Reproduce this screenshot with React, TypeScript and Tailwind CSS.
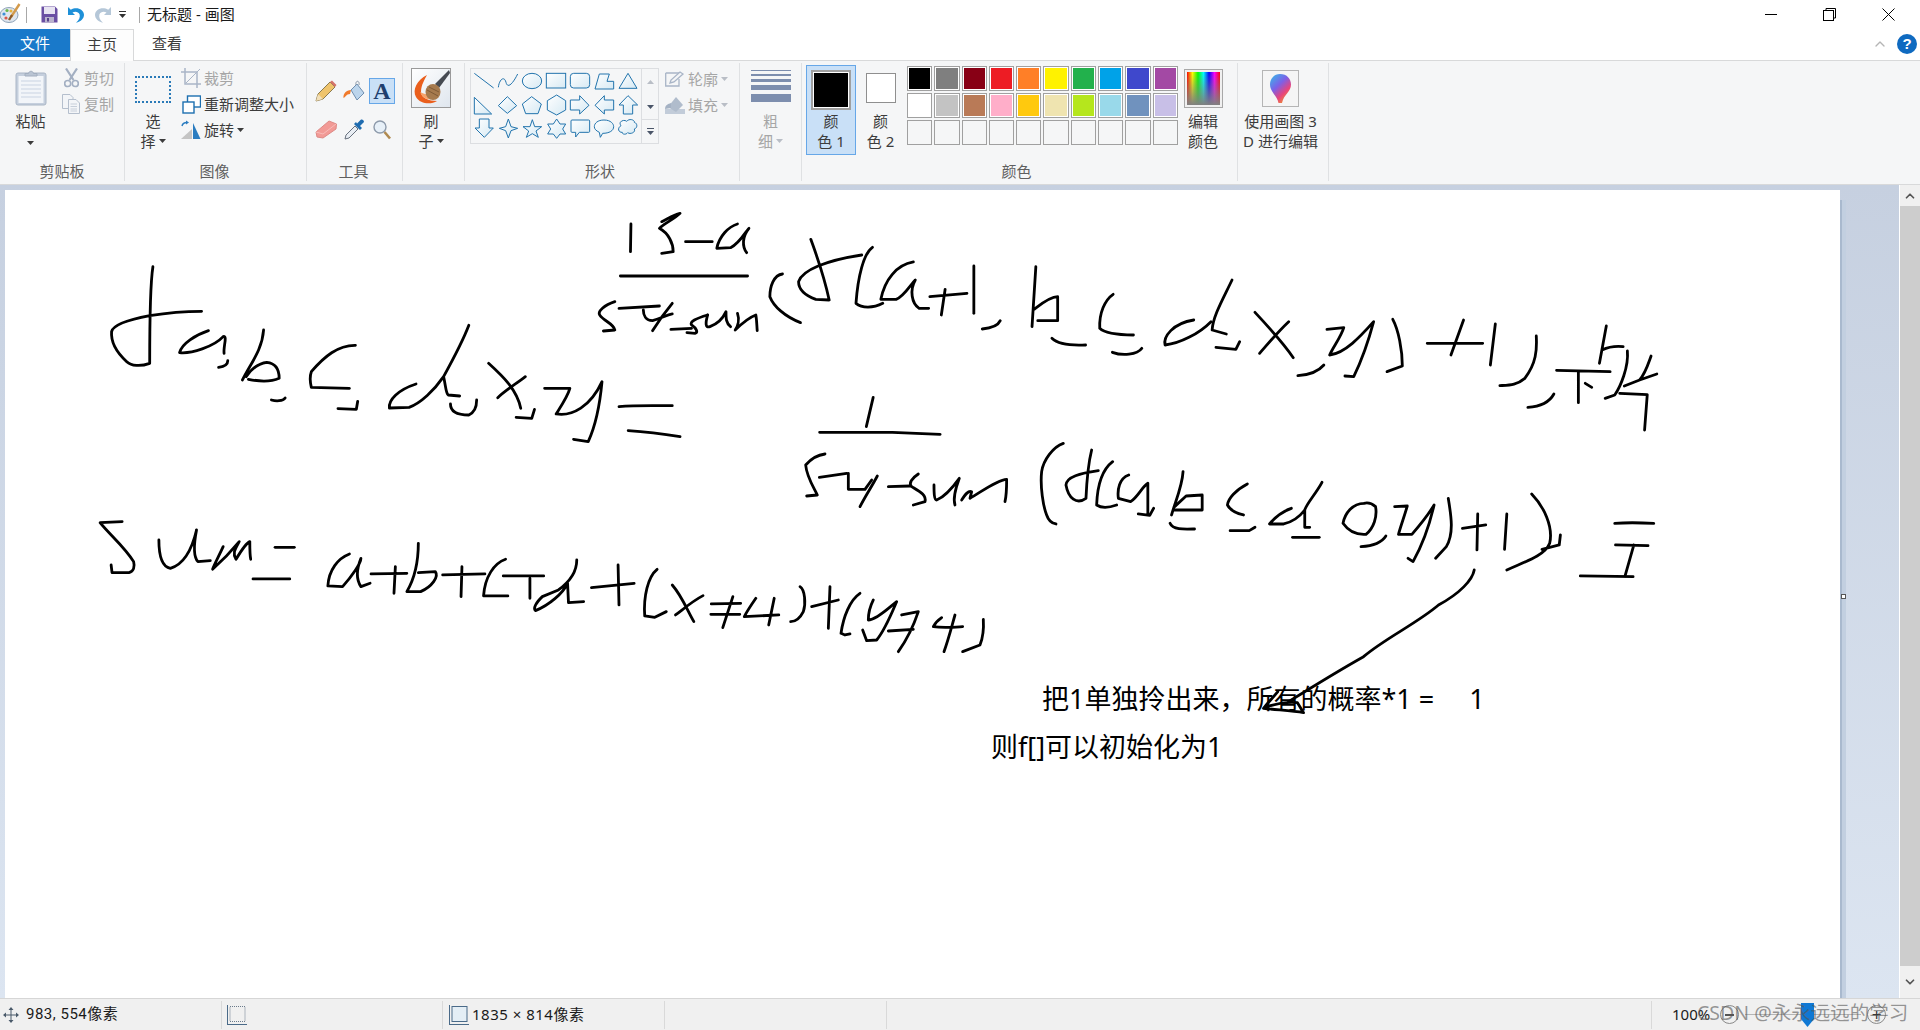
import React from 'react';
import { ChevronUp, ChevronDown } from 'lucide-react';

const row1 = ['#000000', '#7f7f7f', '#880015', '#ed1c24', '#ff7f27', '#fff200', '#22b14c', '#00a2e8', '#3f48cc', '#a349a4'];
const row2 = ['#ffffff', '#c3c3c3', '#b97a57', '#ffaec9', '#ffc90e', '#efe4b0', '#b5e61d', '#99d9ea', '#7092be', '#c8bfe7'];

// handwriting, traced from crops: each group keeps the coordinates of its crop
const inkFirst = [
  'M137 200 C130 260 130 400 130 490 C110 500 90 498 80 485 C60 460 45 430 47 395 C50 375 80 360 130 347 C170 338 200 334 243 334',
  'M258 392 C230 405 200 430 195 458 C220 462 270 440 290 410 C300 405 290 440 292 460',
  'M300 482 C300 495 290 500 280 502',
  'M378 390 C375 450 350 490 332 540 M345 538 C370 545 395 545 412 535 C412 510 405 490 385 487 C365 490 350 510 340 530',
  'M395 600 C405 604 420 604 425 594',
  'M578 436 C540 435 510 470 482 515 C478 530 480 550 482 562 L565 565',
  'M540 626 L580 628 L583 604',
  'M825 376 C810 430 790 480 770 530 C750 570 720 610 695 622 L652 624 C650 600 670 570 710 552 M770 530 C775 560 775 580 780 585 L805 588',
  'M785 612 C785 635 800 645 825 645 C840 635 842 615 842 600',
  'M868 490 C900 530 930 570 938 625 M948 530 C930 550 905 570 888 593',
  'M928 652 L962 655 L968 628',
  'M990 565 L1045 565 C1040 590 1025 620 1015 642 C1050 650 1090 620 1115 545 C1110 620 1100 680 1085 725 L1053 718',
  'M1152 620 C1190 615 1230 617 1268 617',
  'M1172 692 C1210 695 1250 702 1285 710',
  'M1178 72 L1177 155',
  'M1245 65 C1260 55 1270 45 1285 40 C1270 60 1250 70 1240 85 C1260 100 1270 130 1270 155 L1245 160',
  'M1297 125 L1355 125',
  'M1410 72 C1390 80 1370 110 1365 145 L1395 143 C1415 130 1430 90 1435 85 C1420 110 1420 140 1430 158',
  'M1155 228 L1432 228',
  'M1143 305 C1120 315 1105 335 1110 345 C1120 365 1140 370 1143 390 L1118 393',
  'M1152 325 L1240 318',
  'M1205 330 C1205 345 1210 362 1225 362 C1245 355 1255 345 1268 342 M1268 310 C1250 340 1235 370 1225 392',
  'M1265 388 L1310 385',
  'M1345 345 C1320 355 1305 365 1310 375 C1320 385 1325 395 1318 400 L1300 398',
  'M1345 345 C1340 370 1340 385 1350 380 C1370 370 1380 350 1385 335 C1385 355 1385 370 1395 380',
  'M1410 340 C1415 360 1410 380 1405 390 C1420 370 1440 350 1450 345 C1452 360 1452 375 1453 392',
  'M70 965 L22 968 C40 1000 75 1040 95 1085 C98 1100 95 1115 85 1118 L48 1118 L46 1095',
  'M150 1020 C150 1060 155 1100 175 1105 C200 1095 220 1060 232 990 C225 1040 225 1070 235 1085 L262 1082',
  'M290 1040 C280 1070 270 1095 267 1108 C290 1080 310 1050 325 1025 C315 1050 310 1060 318 1078 C330 1050 340 1030 348 1025 C348 1050 348 1065 350 1078',
  'M403 1042 L445 1042',
  'M355 1137 L435 1137',
  'M565 1062 C540 1075 520 1110 518 1158 L550 1160 C570 1130 590 1090 590 1075 C580 1110 580 1140 590 1160 L610 1150',
  'M612 1122 L690 1120 M665 1100 L662 1180',
  'M715 1030 C715 1090 705 1140 690 1175 L720 1175 C745 1160 760 1130 752 1115 L715 1118',
  'M768 1125 L860 1122 M810 1100 L808 1190',
  'M905 1078 C880 1090 860 1130 857 1188 L910 1188',
  'M900 1128 L988 1128 M958 1135 L958 1195',
  'M1060 1080 C1060 1120 1040 1150 1020 1170 L985 1190 C970 1210 965 1225 970 1232 C1000 1215 1030 1180 1040 1150 L1042 1208 L1075 1205',
  'M1092 1163 L1185 1150 M1150 1095 L1152 1215',
  'M1235 1108 C1215 1130 1205 1190 1208 1248 L1230 1252 L1255 1235',
  'M1268 1155 C1290 1190 1300 1230 1315 1265 M1335 1187 C1310 1205 1290 1230 1275 1245',
  'M1352 1243 L1415 1243 M1353 1212 L1417 1210 M1400 1190 L1378 1283',
  'M1450 1195 C1440 1215 1430 1235 1425 1250 L1500 1245 M1490 1195 L1478 1275',
];

const inkTop = [
  'M503 222 C480 225 470 260 470 290 C480 320 510 350 550 368',
  'M577 118 C590 160 610 220 625 300 L590 298 C560 285 545 270 545 245 C555 210 620 180 710 165',
  'M738 142 C715 160 700 230 695 310 C710 325 740 325 765 310',
  'M845 186 C800 195 770 240 760 298 L800 298 C820 290 840 250 850 240 C835 270 840 310 860 325 L885 325',
  'M888 290 L985 280 M928 268 L918 345',
  'M1003 198 L1003 340',
  'M1025 387 C1045 385 1065 380 1072 362',
  'M1165 200 L1155 380 M1158 330 C1170 320 1200 290 1222 290 L1222 362 L1170 362',
  'M1207 415 C1225 435 1260 437 1295 435',
  'M1367 283 C1345 300 1330 340 1332 385 C1345 400 1380 405 1420 405',
  'M1365 457 C1390 468 1430 465 1442 445',
  'M600 697 L790 697 L915 703',
  'M740 592 L722 680',
];

const inkRight = [
  'M345 -30 C320 30 295 80 293 120 L330 132',
  'M290 95 C260 130 210 160 170 165 C165 140 190 100 245 90',
  'M303 172 L355 178 L365 155',
  'M405 67 C440 110 480 160 505 203 M493 95 C465 125 440 160 417 190',
  'M517 257 C545 255 570 245 585 225',
  'M593 118 L637 113 C630 140 610 170 600 195 C640 190 680 140 715 95 C700 160 680 220 663 260 L640 258',
  'M765 88 C780 120 790 180 790 228 L750 245',
  'M855 160 L1000 160 M950 90 L917 195',
  'M1033 102 L1020 225',
  'M1140 138 C1142 180 1140 220 1110 265 C1090 285 1070 285 1045 287',
  'M1118 352 C1150 350 1175 335 1186 312',
  'M1193 241 L1333 245 M1250 245 L1250 338 M1268 280 L1285 292',
  'M1323 108 L1305 220 M1312 180 C1330 170 1350 168 1367 170',
  'M1378 183 C1382 230 1360 290 1345 315 L1320 325',
  'M1440 198 C1430 230 1425 250 1410 270 L1370 288 M1455 252 L1410 270',
  'M1358 310 L1430 314 L1423 420',
  'M75 555 C50 565 45 600 48 625 L80 635 C100 620 110 590 125 580 L125 670 M100 672 L130 676 L140 655',
  'M217 545 C215 590 195 640 187 675 M195 660 L267 660 L267 615 L225 618 L195 650',
  'M183 700 C190 720 220 718 247 717',
  'M385 582 C355 600 335 625 333 645 C340 660 355 670 375 675',
  'M340 722 L390 722 L405 712',
  'M580 577 C565 610 540 640 535 660 L535 712 L548 712 M500 655 C475 665 455 685 443 702 L480 702 C505 695 525 675 535 660',
  'M503 742 L573 742',
  'M690 640 C660 640 640 670 635 700 C650 725 670 735 695 733 C715 715 725 680 720 650 C710 640 700 637 690 640',
  'M682 770 C710 768 735 760 747 738',
  'M770 650 L803 648 C795 680 785 710 780 733 L815 733 C840 700 860 670 873 645 C860 710 840 770 818 815 L805 805',
  'M910 625 C918 680 925 730 905 770 L877 805',
  'M947 715 L1008 705 M987 672 L985 780',
  'M1063 672 L1057 778',
  'M1128 612 C1160 650 1185 710 1175 760 C1165 790 1135 805 1063 840 M1155 778 L1200 765 L1203 735',
  'M1345 700 C1370 698 1410 698 1447 700',
  'M1347 765 L1432 767 M1395 765 L1372 858',
  'M1255 858 L1393 860',
];

const inkMiddle = [
  'M105 72 C80 75 60 90 47 105 C50 140 70 170 82 195 L50 198',
  'M88 142 L170 130',
  'M175 130 L175 178 L225 178 M262 138 C245 170 225 200 210 230 M225 178 L245 150',
  'M295 170 L360 168',
  'M385 132 C365 145 355 160 365 170 C390 185 410 195 405 215 L370 225',
  'M432 165 C432 190 433 210 440 210 C465 200 490 170 508 145 C495 180 490 210 495 225',
  'M515 210 C525 195 535 180 545 185 L540 205 C575 185 620 150 650 148 C650 170 650 195 645 215',
  'M820 40 C790 50 760 90 755 125 C750 170 760 230 770 255 C775 270 785 280 798 282',
  'M905 60 C895 100 890 160 888 205 C860 225 835 205 828 165 C830 140 870 130 925 122',
  'M968 95 C935 120 922 170 920 225 C935 235 960 232 980 225',
];

const inkTail = [
  'M90 50 C105 60 108 100 100 125 C90 145 75 155 62 155',
  'M125 110 L205 90 M180 50 L175 175',
  'M270 70 C240 90 220 140 213 190 L225 195 L240 192',
  'M310 90 C300 110 295 130 295 150 C320 150 360 110 380 95 C365 130 345 180 320 210 L290 212 L278 180',
  'M355 183 L430 178 M395 135 L445 125 C430 170 410 210 385 245',
  'M515 143 C505 150 495 160 490 170 C520 175 550 172 578 170 M555 135 C545 170 535 210 522 245',
  'M640 148 C642 180 640 200 630 225 L578 245',
];

const inkArrow = [
  'M1440 30 C1435 60 1400 100 1340 135 C1280 190 1190 235 1130 290 C1080 320 1010 365 920 425',
  'M890 395 C875 415 860 430 850 445 C890 450 930 452 962 458 L945 428 C920 425 890 430 860 440',
];

function Ink({ paths, transform }: { paths: string[]; transform: string }) {
  return (
    <g transform={transform}>
      {paths.map((d) => (
        <path key={d} d={d} fill="none" stroke="#000" strokeWidth="2.8" strokeLinecap="round" strokeLinejoin="round" vectorEffect="non-scaling-stroke" />
      ))}
    </g>
  );
}

function PaintLogo() {
  return (
    <svg width="21" height="21" viewBox="0 0 21 21">
      <ellipse cx="9" cy="12" rx="9" ry="7.5" fill="#dfe6ee" stroke="#8fa3b8" />
      <circle cx="4" cy="11" r="1.6" fill="#3d8fd6" />
      <circle cx="7" cy="7.5" r="1.6" fill="#6cb84a" />
      <circle cx="11" cy="8" r="1.5" fill="#e8b23a" />
      <circle cx="6" cy="15" r="1.6" fill="#d9574a" />
      <path d="M19.5 1 L11 14" stroke="#d39a4b" strokeWidth="2.4" />
      <path d="M12 12 L9 17" stroke="#8a5a2a" strokeWidth="2.4" />
    </svg>
  );
}

function SaveIcon() {
  return (
    <svg width="17" height="17" viewBox="0 0 17 17">
      <path d="M0.5 0.5 H14 L16.5 3 V16.5 H0.5 Z" fill="#6a4fa3" />
      <rect x="3" y="1" width="11" height="7" fill="#e8e4f2" />
      <rect x="4" y="11" width="9" height="5.5" fill="#b9b3cd" />
      <rect x="6" y="12" width="2" height="3.5" fill="#57428a" />
    </svg>
  );
}

function UndoIcon({ color, flip }: { color: string; flip?: boolean }) {
  return (
    <svg width="18" height="18" viewBox="0 0 18 18" className={flip ? '-scale-x-100' : ''}>
      <path d="M1 1 V9 H8 L5.5 6.6 C8 5 11.5 5.6 12.6 8.4 C13.4 11 12 14 9 16.8 C14 15.8 17 12.4 17 8.8 C16.6 3.2 9.6 0.4 3.8 3.8 Z" fill={color} />
    </svg>
  );
}

function SmallCaret({ color = '#3c3c3c' }: { color?: string }) {
  return (
    <svg width="7" height="4" viewBox="0 0 7 4" className="inline-block">
      <path d="M0 0 H7 L3.5 4 Z" fill={color} />
    </svg>
  );
}

function PasteIcon() {
  return (
    <svg width="32" height="36" viewBox="0 0 32 36">
      <rect x="1" y="3" width="30" height="32" rx="2" fill="#c5cfdd" stroke="#aab6c6" />
      <rect x="3.5" y="6" width="25" height="27" fill="#f2f5f9" />
      <path d="M6 11 H26 M6 15 H26 M6 19 H26 M6 23 H26 M6 27 H26" stroke="#c9d3e2" />
      <path d="M10 6 V3.5 H13.5 C14 0.5 18 0.5 18.5 3.5 H22 V6 Z" fill="#b9c4d3" stroke="#a2aebf" />
    </svg>
  );
}

function CutIcon() {
  return (
    <svg width="15" height="20" viewBox="0 0 15 20" fill="none" stroke="#a3afc2" strokeWidth="1.6">
      <path d="M2 0.5 L9.5 12 M13 0.5 L5.5 12" strokeWidth="2.2" />
      <circle cx="3.7" cy="15.5" r="3" />
      <circle cx="11.3" cy="15.5" r="3" />
    </svg>
  );
}

function CopyIcon() {
  return (
    <svg width="18" height="20" viewBox="0 0 18 20" fill="#f3f5f8" stroke="#b5bfcd">
      <path d="M0.5 0.5 H8 L11 3.5 V14.5 H0.5 Z" />
      <path d="M6.5 5.5 H14 L17.5 9 V19.5 H6.5 Z" />
      <path d="M8.5 10 H15 M8.5 12.5 H15 M8.5 15 H15 M8.5 17 H15" stroke="#c7cfda" />
    </svg>
  );
}

function CropIcon() {
  return (
    <svg width="20" height="20" viewBox="0 0 20 20" fill="none" stroke="#a9b5c7" strokeWidth="1.5">
      <path d="M4 0 V16 H20 M0 4 H16 V20" />
      <path d="M19 1 L5 15" strokeWidth="1" />
    </svg>
  );
}

function ResizeIcon() {
  return (
    <svg width="19" height="19" viewBox="0 0 19 19" fill="#fff" stroke="#1d6fb0" strokeWidth="1.4">
      <rect x="5.5" y="1" width="13" height="11" />
      <rect x="1" y="7" width="11" height="11" />
    </svg>
  );
}

function RotateIcon() {
  return (
    <svg width="20" height="20" viewBox="0 0 20 20">
      <path d="M11 19 H0 L11 9 Z" fill="#c4c4c4" />
      <path d="M12 3 L19.5 19 H12 Z" fill="#2a7cc0" />
      <path d="M1 6 C1.5 3.5 3.5 2.5 6 2.5" fill="none" stroke="#2a7cc0" strokeWidth="1.4" />
      <path d="M5 0.5 L8 2.5 L5 4.5 Z" fill="#2a7cc0" />
    </svg>
  );
}

function PencilIcon() {
  return (
    <svg width="22" height="22" viewBox="0 0 22 22">
      <path d="M1 21 L3 14 L15 2 L20 7 L8 19 Z" fill="#efc46c" stroke="#8a7a50" />
      <path d="M1 21 L3 14 L8 19 Z" fill="#f2dfb8" />
      <path d="M15 2 L17 0.5 L21.5 5 L20 7 Z" fill="#d4736a" />
    </svg>
  );
}

function BucketIcon() {
  return (
    <svg width="22" height="22" viewBox="0 0 22 22">
      <path d="M8 10 L14 4 L21 13 L14 20 Z" fill="#bcd5ec" stroke="#6f8fb0" />
      <path d="M13 5 C12 0 17 0 16 5" fill="none" stroke="#8b98a8" />
      <path d="M8 10 C3 10 0 14 0.5 18 C3 17 3 14 7 14 Z" fill="#f07a2c" />
    </svg>
  );
}

function EraserIcon() {
  return (
    <svg width="22" height="19" viewBox="0 0 22 19">
      <path d="M1 12 L14 1 L21.5 4 L21 9 L8 18 L2 17 Z" fill="#f29a96" stroke="#dd8a86" />
      <path d="M1 12 L8 14 L21 4" fill="none" stroke="#f8bcb9" />
    </svg>
  );
}

function DropperIcon() {
  return (
    <svg width="21" height="21" viewBox="0 0 21 21">
      <path d="M1 20 L2 16 L11 7 L14 10 L5 19 Z" fill="#e9eef4" stroke="#68717e" />
      <path d="M10 5 L16 11 L18 9 L16 7 L20 3 C20 1 18 0 16.5 1 L13 4.5 L12 3 Z" fill="#1f6cb0" />
    </svg>
  );
}

function ZoomIcon() {
  return (
    <svg width="18" height="20" viewBox="0 0 18 20">
      <circle cx="7" cy="7" r="6" fill="#e7f0f8" stroke="#8d9aab" strokeWidth="1.4" />
      <path d="M11.5 12 L17 18.5" stroke="#b08a50" strokeWidth="2.6" />
    </svg>
  );
}

function BrushIcon() {
  return (
    <svg width="40" height="40" viewBox="0 0 40 40">
      <defs>
        <linearGradient id="brushBg" x1="0" y1="0" x2="1" y2="1">
          <stop offset="0" stopColor="#ffffff" />
          <stop offset="1" stopColor="#dfe6ee" />
        </linearGradient>
      </defs>
      <rect x="0.5" y="0.5" width="39" height="39" fill="url(#brushBg)" stroke="#9a9a9a" />
      <path d="M16 7 C6 12 1 22 5 29 C9 36 20 37 26 33 C18 33 10 30 10 24 C10 17 14 11 16 7 Z" fill="#ea5f1d" />
      <path d="M9 24 C14 27 20 27 24 25 L20 31 C15 32 11 29 9 24 Z" fill="#f7a36a" />
      <path d="M24 16 L38 2 L39 5 L28 20 Z" fill="#454a52" />
      <ellipse cx="22" cy="24" rx="7.5" ry="8" fill="#a67a4d" />
      <path d="M16 22 L27 28 M18 19 L28 24" stroke="#7f5a36" />
    </svg>
  );
}

function ShapesGallery() {
  const bubble = 'M333 208 H383 Q386 208 386 211 V242 Q386 245 383 245 H355 L344 259 V245 H333 Q330 245 330 242 V211 Q330 208 333 208 Z';
  const cloud = 'M480 225 C470 212 490 205 497 212 C505 202 522 208 520 215 C530 218 530 232 520 235 C525 245 508 252 500 246 C494 254 482 250 484 245 C472 246 468 232 480 225 Z';
  const shapes = [
    'M328 148 H356 V135 L384 164 L356 190 V178 H328 Z',
    'M458 148 H430 V135 L402 164 L430 190 V178 H458 Z',
    'M501 135 L530 163 H515 V190 H487 V163 H474 Z',
    'M55 205 H84 V232 H97 L70 260 L42 232 H55 Z',
    'M142 205 L150 228 L170 233 L150 240 L142 262 L134 240 L115 233 L134 228 Z',
    'M214 207 L221 228 L242 228 L225 241 L232 260 L214 249 L196 260 L203 241 L186 228 L207 228 Z',
    'M287 205 L297 220 L314 220 L305 235 L314 250 L297 250 L287 263 L277 250 L260 250 L269 235 L260 220 L277 220 Z',
    bubble,
    'M429 208 C450 208 458 220 458 228 C458 240 445 248 425 248 L418 260 L415 245 C405 240 400 235 400 228 C400 218 410 208 429 208 Z',
    cloud,
    'M40 140 L92 190 H40 Z',
    'M139 138 L167 165 L139 188 L112 165 Z',
    'M212 138 L241 160 L231 189 H194 L184 160 Z',
    'M287 133 L314 150 V178 L287 193 L259 178 V150 Z',
    'M415 70 H445 L438 92 H458 V115 H402 Z',
    'M501 68 L528 113 H474 Z',
  ];
  return (
    <svg width="170" height="75" viewBox="30 55 510 225" className="block">
      <defs>
        <linearGradient id="shapeFill" x1="0" y1="0" x2="1" y2="1">
          <stop offset="0" stopColor="#ffffff" />
          <stop offset="1" stopColor="#d6e9f3" />
        </linearGradient>
      </defs>
      <g fill="url(#shapeFill)" stroke="#2274ad" strokeWidth="3">
        <path d="M40 68 L98 112" fill="none" />
        <path d="M112 110 C115 85 130 75 135 95 C140 115 155 100 170 70" fill="none" />
        <ellipse cx="213" cy="91" rx="29" ry="23" />
        <rect x="256" y="68" width="58" height="44" />
        <rect x="328" y="68" width="58" height="44" rx="10" />
        {shapes.map((d) => (
          <path key={d} d={d} />
        ))}
      </g>
    </svg>
  );
}

function OutlineIcon() {
  return (
    <svg width="20" height="16" viewBox="0 0 20 16" fill="none" stroke="#a9b5c7" strokeWidth="1.3">
      <path d="M0.7 2 H14 M0.7 2 V15 H14 V8" />
      <path d="M5 12 L6 9 L15 1 L18 3 L9 11 Z" fill="#f4f5f7" />
    </svg>
  );
}

function FillIcon() {
  return (
    <svg width="20" height="20" viewBox="0 0 20 20">
      <path d="M0 19 H20 V14 H0 Z" fill="#c2ccd9" />
      <path d="M3 12 L11 2 L18 10 L11 17 Z" fill="#b0bccc" />
      <path d="M0 14 C0 10 3 9 6 8 L6 13 Z" fill="#a5b2c4" />
    </svg>
  );
}

function ThicknessIcon() {
  return (
    <svg width="40" height="33" viewBox="0 0 40 33" className="block" fill="#7d8eae">
      <rect x="0" y="0" width="40" height="1" />
      <rect x="0" y="4" width="40" height="2" />
      <rect x="0" y="9" width="40" height="3" />
      <rect x="0" y="15" width="40" height="5" />
      <rect x="0" y="24" width="40" height="8" />
    </svg>
  );
}

function Paint3dIcon() {
  return (
    <svg width="37" height="37" viewBox="0 0 37 37" className="block">
      <defs>
        <linearGradient id="dropFill" x1="0.1" y1="0" x2="0.8" y2="1">
          <stop offset="0" stopColor="#39b6e8" />
          <stop offset="0.4" stopColor="#7b61e8" />
          <stop offset="0.7" stopColor="#e8447c" />
          <stop offset="1" stopColor="#f0a020" />
        </linearGradient>
      </defs>
      <rect x="0.5" y="0.5" width="36" height="36" fill="#f5f5f5" stroke="#b5b5b5" />
      <path d="M18 4 C25 4 29 9 29 14.5 C29 22 22 24 20 33 C18 33 17 33 16.5 33 C15.5 26 8 22 8 14.5 C8 9 12 4 18 4 Z" fill="url(#dropFill)" />
    </svg>
  );
}

function MoveIcon() {
  return (
    <svg width="16" height="16" viewBox="0 0 16 16" fill="#4a5a6a">
      <path d="M7.5 2 H8.5 V14 H7.5 Z M2 7.5 H14 V8.5 H2 Z" />
      <path d="M8 0 L10.5 3 H5.5 Z M8 16 L5.5 13 H10.5 Z M0 8 L3 5.5 V10.5 Z M16 8 L13 5.5 V10.5 Z" />
    </svg>
  );
}

function SelectionSizeIcon() {
  return (
    <svg width="20" height="20" viewBox="0 0 20 20" fill="none">
      <path d="M0.5 0 V20 M0 19.5 H20" stroke="#4a6a88" />
      <rect x="3" y="1.5" width="15" height="15" stroke="#6a7a8a" strokeDasharray="1 1" />
    </svg>
  );
}

function CanvasSizeIcon() {
  return (
    <svg width="20" height="20" viewBox="0 0 20 20">
      <path d="M0.5 0 V20 M0 19.5 H20" stroke="#4a6a88" fill="none" />
      <rect x="3" y="1.5" width="15" height="15" fill="#e4eef5" stroke="#4a6a88" />
    </svg>
  );
}

function Group({ width, label, labelPad = '', children }: { width: string; label: string; labelPad?: string; children: React.ReactNode }) {
  return (
    <div className={`${width} h-full shrink-0 flex flex-col border-r border-[#dfe1e3]`}>
      <div className="h-[98px] flex">{children}</div>
      <div className={`h-5 text-center leading-5 text-[#5f5f5f] ${labelPad}`}>{label}</div>
    </div>
  );
}

function Big({ icon, width, children }: { icon: React.ReactNode; width: string; children: React.ReactNode }) {
  return (
    <div className={`${width} shrink-0 flex flex-col items-center`}>
      <div className="h-[48px] flex items-center justify-center">{icon}</div>
      <div className="text-center leading-5">{children}</div>
    </div>
  );
}

function SmallRow({ icon, disabled, children }: { icon: React.ReactNode; disabled?: boolean; children: React.ReactNode }) {
  return (
    <div className={`h-[26px] flex items-center gap-[3px] ${disabled ? 'text-[#a6a6a6]' : ''}`}>
      <div className="w-[20px] flex justify-center">{icon}</div>
      {children}
    </div>
  );
}

function Ribbon() {
  return (
    <div className="h-[124px] shrink-0 bg-[#f5f6f7] pt-[2px] flex text-[15px] text-[#3c3c3c] border-b border-[#d8d9da]">
      <div className="h-[118px] flex">
        <Group width="w-[125px]" label="剪贴板">
          <Big width="w-[61px]" icon={<div className="mt-[2px]"><PasteIcon /></div>}>
            粘贴
            <div className="leading-5">
              <SmallCaret />
            </div>
          </Big>
          <div className="pt-[2px]">
            <SmallRow disabled icon={<CutIcon />}>剪切</SmallRow>
            <SmallRow disabled icon={<CopyIcon />}>复制</SmallRow>
          </div>
        </Group>
        <Group width="w-[182px]" label="图像" labelPad="pr-[2px]">
          <Big
            width="w-[56px]"
            icon={<div className="w-[36px] h-[27px] mt-[5px] border-2 border-dotted border-[#2a7ab8]" />}
          >
            选
            <div className="flex items-center justify-center gap-[3px]">
              择 <SmallCaret />
            </div>
          </Big>
          <div className="pt-[2px]">
            <SmallRow disabled icon={<CropIcon />}>裁剪</SmallRow>
            <SmallRow icon={<ResizeIcon />}>重新调整大小</SmallRow>
            <SmallRow icon={<RotateIcon />}>
              旋转 <SmallCaret />
            </SmallRow>
          </div>
        </Group>
        <Group width="w-[96px]" label="工具" labelPad="pr-[2px]">
          <div className="w-full pt-[14px] pl-[5px] grid grid-cols-[28px_28px_28px] grid-rows-[27px_27px] gap-y-[12px] justify-items-center items-center">
            <PencilIcon />
            <BucketIcon />
            <div className="w-[26px] h-[26px] bg-[#c9e0f7] border border-[#66a7e8] flex items-center justify-center font-['Liberation_Serif',serif] font-bold text-[24px] leading-none text-[#1f3f6f]">
              A
            </div>
            <EraserIcon />
            <DropperIcon />
            <ZoomIcon />
          </div>
        </Group>
        <Group width="w-[62px]" label="">
          <Big width="w-[56px]" icon={<div className="mt-[2px]"><BrushIcon /></div>}>
            刷
            <div className="flex items-center justify-center gap-[3px]">
              子 <SmallCaret />
            </div>
          </Big>
        </Group>
        <Group width="w-[275px]" label="形状" labelPad="pr-[4px]">
          <div className="ml-[5px] mt-[5px] h-[76px] flex border border-[#dcdee1]">
            <ShapesGallery />
            <div className="w-[17px] flex flex-col items-center border-l border-[#dcdee1]">
              <div className="h-[25px] flex items-center">
                <svg width="7" height="4" viewBox="0 0 7 4"><path d="M0 4 H7 L3.5 0 Z" fill="#b9bec6" /></svg>
              </div>
              <div className="h-[25px] flex items-center">
                <SmallCaret color="#4a5568" />
              </div>
              <div className="h-[24px] flex flex-col items-center justify-center gap-[2px] border-t border-[#dcdee1] w-full">
                <div className="w-[7px] h-px bg-[#4a5568]" />
                <SmallCaret color="#4a5568" />
              </div>
            </div>
          </div>
          <div className="pl-[6px] pt-[3px]">
            <SmallRow disabled icon={<OutlineIcon />}>
              轮廓 <SmallCaret color="#b9bec6" />
            </SmallRow>
            <SmallRow disabled icon={<FillIcon />}>
              填充 <SmallCaret color="#b9bec6" />
            </SmallRow>
          </div>
        </Group>
        <Group width="w-[62px]" label="">
          <div className="w-full flex flex-col items-center text-[#a6a6a6]">
            <div className="h-[48px] pt-[7px]">
              <ThicknessIcon />
            </div>
            <div className="leading-5">粗</div>
            <div className="leading-5 flex items-center gap-[3px]">
              细 <SmallCaret color="#b9bec6" />
            </div>
          </div>
        </Group>
        <Group width="w-[436px]" label="颜色" labelPad="pr-[6px]">
          <div className="ml-[4px] mt-[2px] w-[50px] h-[90px] bg-[#c9e0f7] border border-[#66a7e8] flex flex-col items-center">
            <div className="h-[45px] flex items-center">
              <div className="w-[40px] h-[40px] border-2 border-[#a0a0a0] bg-white p-px mt-[2px]">
                <div className="w-full h-full bg-black" />
              </div>
            </div>
            <div className="leading-5 text-center">
              颜
              <br />色 1
            </div>
          </div>
          <div className="w-[49px] flex flex-col items-center">
            <div className="h-[48px] flex items-center">
              <div className="w-[30px] h-[30px] mt-[2px] border border-[#8f8f8f] bg-white" />
            </div>
            <div className="leading-5 text-center">
              颜
              <br />色 2
            </div>
          </div>
          <div className="ml-[2px] mt-[3px] w-[271px] h-fit grid grid-cols-10 gap-x-[2px] gap-y-[2px]">
            {row1.concat(row2).map((c) => (
              <div key={c} className="h-[25px] border border-[#a0a0a0] bg-white p-px">
                <div className="w-full h-full" style={{ backgroundColor: c }} />
              </div>
            ))}
            {row1.map((c) => (
              <div key={c} className="h-[25px] border border-[#a0a0a0] bg-[#f5f6f7]" />
            ))}
          </div>
          <Big
            width="w-[50px]"
            icon={
              <div className="w-[37px] h-[37px] mt-[3px] border-2 border-[#f0f0f0] outline outline-[#a8a8a8] bg-[linear-gradient(to_bottom,transparent,#808080),linear-gradient(to_right,#ff0000,#ffff00,#00ff00,#00ffff,#0000ff,#ff00ff,#ff0000)]" />
            }
          >
            编辑
            <br />
            颜色
          </Big>
        </Group>
        <Group width="w-[91px]" label="">
          <Big width="w-[85px]" icon={<div className="mt-[3px]"><Paint3dIcon /></div>}>
            使用画图 3
            <br />D 进行编辑
          </Big>
        </Group>
      </div>
      <div className="flex-1" />
    </div>
  );
}

function TitleBar() {
  return (
    <div className="h-[29px] shrink-0 flex items-center bg-white text-[15px] text-[#1a1a1a]">
      <div className="w-[26px] flex pb-[2px]">
        <PaintLogo />
      </div>
      <div className="w-px h-[16px] bg-[#a8a8a8]" />
      <div className="ml-[14px] flex items-center gap-[9px]">
        <SaveIcon />
        <UndoIcon color="#1e90d8" />
        <UndoIcon color="#b5c7d8" flip />
      </div>
      <div className="ml-[7px] flex flex-col items-center gap-[2px]">
        <div className="w-[7px] h-px bg-[#333]" />
        <SmallCaret color="#333" />
      </div>
      <div className="ml-[13px] w-px h-[16px] bg-[#a8a8a8]" />
      <div className="ml-[7px]">无标题 - 画图</div>
      <div className="flex-1" />
      <div className="w-[12px] h-px bg-black mr-[46px]" />
      <svg width="13" height="13" viewBox="0 0 13 13" fill="none" stroke="#000" className="mr-[46px]">
        <rect x="0.5" y="2.5" width="10" height="10" />
        <path d="M3 2.5 V0.5 H12.5 V10 H10.5" />
      </svg>
      <svg width="13" height="13" viewBox="0 0 13 13" fill="none" stroke="#000" className="mr-[25px]">
        <path d="M0.5 0.5 L12.5 12.5 M12.5 0.5 L0.5 12.5" />
      </svg>
    </div>
  );
}

function Tabs() {
  return (
    <div className="h-[32px] shrink-0 flex items-start bg-white text-[15px] border-b border-[#d8d9da] relative">
      <div className="w-[70px] h-[28px] bg-[#1979ca] text-white flex items-center justify-center">文件</div>
      <div className="w-[64px] h-[32px] pb-[3px] bg-[#fdfdfd] border-x border-t border-[#d8d9da] flex items-center justify-center text-[#3c3c3c] z-10">
        主页
      </div>
      <div className="w-[66px] h-[28px] flex items-center justify-center text-[#3c3c3c]">查看</div>
      <div className="flex-1" />
      <ChevronUp className="w-[16px] h-[16px] mt-[7px] mr-[9px] text-[#b5b5b5]" />
      <div className="w-[20px] h-[20px] mt-[5px] mr-[3px] rounded-full bg-[#0f6ac0] text-white font-bold text-[15px] leading-[20px] text-center font-['Liberation_Sans',sans-serif]">
        ?
      </div>
    </div>
  );
}

function Canvas() {
  return (
    <div className="w-[1835px] h-[808px] bg-white relative shadow-[3px_9px_0_-1px_#a9b9ce,7px_9px_0_-1px_#c2cfe0]">
      <div className="absolute left-[1037px] top-[494px] text-[27px] leading-[30px] text-black whitespace-pre">
        把1单独拎出来，所有的概率*1 =     1
      </div>
      <div className="absolute left-[986px] top-[542px] text-[27px] leading-[30px] text-black whitespace-pre">
        则f[]可以初始化为1
      </div>
      <svg width="1835" height="808" viewBox="5 190 1835 808" className="absolute inset-0">
        <Ink paths={inkFirst} transform="translate(90 200) scale(0.4592 0.3333)" />
        <Ink paths={inkTop} transform="translate(590 200) scale(0.3827 0.3333)" />
        <Ink paths={inkRight} transform="translate(1100 290) scale(0.3827 0.3333)" />
        <Ink paths={inkMiddle} transform="translate(790 430) scale(0.3333)" />
        <Ink paths={inkTail} transform="translate(770 570) scale(0.3333)" />
        <Ink paths={inkArrow} transform="translate(960 560) scale(0.3571 0.3333)" />
      </svg>
      <div className="absolute left-[1836px] top-[404px] w-[5px] h-[5px] bg-white border border-[#555]" />
    </div>
  );
}

function Scrollbar() {
  return (
    <div className="w-[21px] shrink-0 bg-[#f0f0f0] border-l border-white flex flex-col">
      <div className="h-[21px] flex items-center justify-center">
        <ChevronUp className="w-[14px] h-[14px] text-[#555]" strokeWidth={3} />
      </div>
      <div className="h-[760px] bg-[#cdcdcd]" />
      <div className="flex-1 flex items-center justify-center">
        <ChevronDown className="w-[14px] h-[14px] text-[#555]" strokeWidth={3} />
      </div>
    </div>
  );
}

function StatusBar() {
  return (
    <div className="h-[32px] shrink-0 bg-[#f0f0f0] border-t border-[#d6d6d6] flex items-center text-[15px] text-[#1a1a1a] relative">
      <div className="w-[222px] h-[28px] pl-[3px] flex items-center gap-[7px] border-r border-[#d9d9d9]">
        <MoveIcon />
        <span className="tracking-[0.5px] font-['Roboto','Noto_Sans_CJK_SC',sans-serif]">983, 554像素</span>
      </div>
      <div className="w-[221px] h-[28px] pl-[5px] flex items-center border-r border-[#d9d9d9]">
        <SelectionSizeIcon />
      </div>
      <div className="w-[222px] h-[28px] pl-[6px] flex items-center gap-[3px] border-r border-[#d9d9d9]">
        <CanvasSizeIcon />
        <span className="tracking-[0.5px]">1835 × 814像素</span>
      </div>
      <div className="w-[222px] h-[28px] border-r border-[#d9d9d9]" />
      <div className="w-[765px] h-[28px] border-r border-[#d9d9d9]" />
      <div className="ml-[20px] w-[38px]">100%</div>
      <div className="ml-[10px] w-[19px] h-[19px] rounded-full border border-[#8a8a8a] flex items-center justify-center">
        <div className="w-[9px] h-[2px] bg-[#555]" />
      </div>
      <div className="relative ml-[6px] w-[116px] h-px bg-[#b5b5b5]">
        <svg width="13" height="24" viewBox="0 0 13 24" className="absolute left-[56px] -top-[11px]">
          <path d="M0 0 H13 V16 L6.5 24 L0 16 Z" fill="#0f78d4" />
        </svg>
      </div>
      <div className="ml-[6px] w-[19px] h-[19px] rounded-full border border-[#8a8a8a] flex items-center justify-center text-[17px] leading-none text-[#333]">
        +
      </div>
      <div className="absolute left-[1697px] top-[1px] text-[19.5px] leading-[26px] text-[#555]/60 whitespace-pre">
        CSDN @永永远远的学习
      </div>
    </div>
  );
}

export default function App() {
  return (
    <div className="w-[1920px] h-[1030px] overflow-hidden flex flex-col font-['Noto_Sans','Noto_Sans_CJK_SC',sans-serif]">
      <TitleBar />
      <Tabs />
      <Ribbon />
      <div className="flex-1 min-h-0 flex">
        <div className="flex-1 pl-[5px] pt-[5px] bg-gradient-to-b from-[#c6d0e0] to-[#dce5f1] overflow-hidden">
          <Canvas />
        </div>
        <Scrollbar />
      </div>
      <StatusBar />
    </div>
  );
}
